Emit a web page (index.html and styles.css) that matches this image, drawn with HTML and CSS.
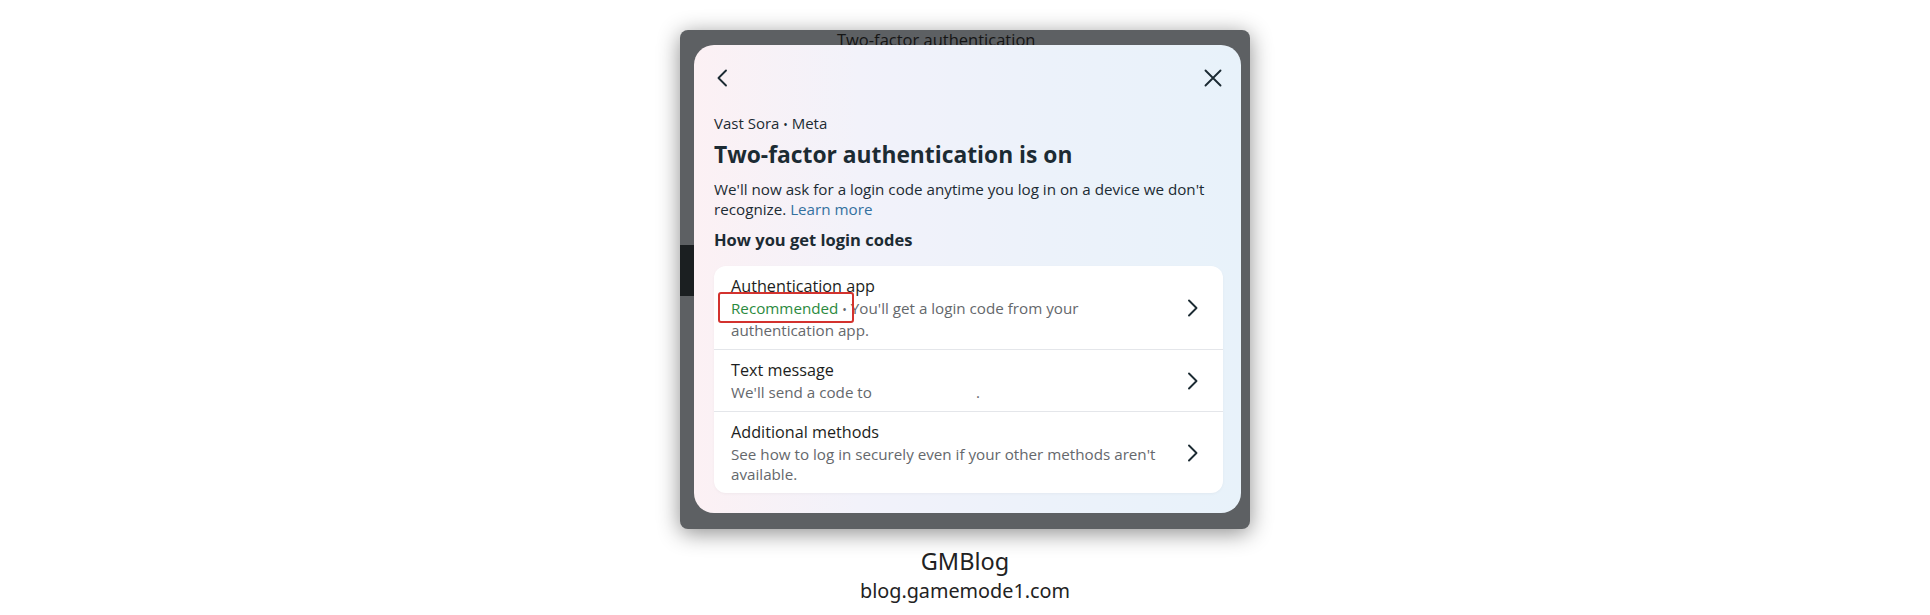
FILE: index.html
```html
<!DOCTYPE html>
<html lang="en">
<head>
<meta charset="utf-8">
<title>Two-factor authentication</title>
<link rel="stylesheet" href="styles.css">
</head>
<body>
<div class="page">
  <div class="frame">
    <div class="bg-title">Two-factor authentication</div>
    <div class="bg-block"></div>
    <div class="card">
      <div class="card-head">
        <button class="icon-btn back" aria-label="Back">
          <svg width="12" height="18" viewBox="0 0 12 18"><polyline points="10,1.5 2.5,9 10,16.5" fill="none" stroke="#1c2b33" stroke-width="1.9" stroke-linecap="round" stroke-linejoin="round"/></svg>
        </button>
        <button class="icon-btn close" aria-label="Close">
          <svg width="18" height="18" viewBox="0 0 18 18"><path d="M1.5 1.5 L16.5 16.5 M16.5 1.5 L1.5 16.5" fill="none" stroke="#1c2b33" stroke-width="1.9" stroke-linecap="round"/></svg>
        </button>
      </div>
      <div class="account">Vast Sora <span class="dot">•</span> Meta</div>
      <h1 class="title">Two-factor authentication is on</h1>
      <p class="desc">We'll now ask for a login code anytime you log in on a device we don't recognize. <a class="link" href="#">Learn more</a></p>
      <h2 class="subhead">How you get login codes</h2>
      <div class="list">
        <div class="row">
          <div class="row-text">
            <div class="row-title">Authentication app</div>
            <div class="row-sub"><span class="rec">Recommended<span class="mark"></span></span> <span class="dot">•</span> You'll get a login code from your authentication app.</div>
          </div>
          <svg class="chev" width="12" height="18" viewBox="0 0 12 18"><polyline points="2,1.5 9.5,9 2,16.5" fill="none" stroke="#1c2b33" stroke-width="1.9" stroke-linecap="round" stroke-linejoin="round"/></svg>
        </div>
        <div class="row">
          <div class="row-text">
            <div class="row-title">Text message</div>
            <div class="row-sub">We'll send a code to <span class="redacted"></span>.</div>
          </div>
          <svg class="chev" width="12" height="18" viewBox="0 0 12 18"><polyline points="2,1.5 9.5,9 2,16.5" fill="none" stroke="#1c2b33" stroke-width="1.9" stroke-linecap="round" stroke-linejoin="round"/></svg>
        </div>
        <div class="row">
          <div class="row-text">
            <div class="row-title">Additional methods</div>
            <div class="row-sub">See how to log in securely even if your other methods aren't available.</div>
          </div>
          <svg class="chev" width="12" height="18" viewBox="0 0 12 18"><polyline points="2,1.5 9.5,9 2,16.5" fill="none" stroke="#1c2b33" stroke-width="1.9" stroke-linecap="round" stroke-linejoin="round"/></svg>
        </div>
      </div>
    </div>
  </div>
  <div class="footer">
    <div class="brand">GMBlog</div>
    <div class="url">blog.gamemode1.com</div>
  </div>
</div>
</body>
</html>
```
FILE: styles.css
```css
* { box-sizing: border-box; }

html, body {
  margin: 0;
  padding: 0;
  background: #ffffff;
}

body {
  font-family: "Open Sans", "Noto Sans", sans-serif;
  color: #1c2b33;
}

.page {
  display: flex;
  flex-direction: column;
  align-items: center;
  padding-top: 30px;
}

.frame {
  position: relative;
  width: 570px;
  height: 499px;
  background: #5d6063;
  border-radius: 8px;
  padding: 15px 9px 16px 14px;
  box-shadow: 0 4px 22px rgba(0, 0, 0, 0.45);
}

.bg-title {
  position: absolute;
  left: 157px;
  top: 0;
  font-size: 16.5px;
  line-height: 20px;
  color: #151515;
  white-space: nowrap;
}

.bg-block {
  position: absolute;
  left: 0;
  top: 215px;
  width: 14px;
  height: 51px;
  background: #1b1f21;
}

.card {
  position: relative;
  height: 100%;
  border-radius: 20px;
  background: linear-gradient(90deg, #fcf1f4 0%, #f2f2fa 30%, #ecf2fa 65%, #e8f2fa 100%);
  padding: 2.5px 18px 20px 20px;
  display: flex;
  flex-direction: column;
}

.card-head {
  height: 66px;
  display: flex;
  align-items: center;
  justify-content: space-between;
  margin-right: 1px;
}

.icon-btn {
  border: 0;
  background: none;
  padding: 0;
  display: flex;
  align-items: center;
  justify-content: center;
  cursor: pointer;
}

.icon-btn.back { margin-left: 2px; }

.dot {
  font-size: 0.8em;
}

.account {
  margin-top: 5.5px;
  font-size: 15px;
  line-height: 20px;
  color: #1c2b33;
}

.title {
  margin: 5px 0 0;
  font-size: 22.8px;
  line-height: 30px;
  font-weight: 700;
  color: #1c2b33;
}

.desc {
  margin: 9px 0 0;
  font-size: 15.2px;
  line-height: 20px;
  color: #1c2b33;
}

.link {
  color: #33709f;
  text-decoration: none;
}

.subhead {
  margin: 10px 0 0;
  font-size: 16.5px;
  line-height: 22px;
  font-weight: 700;
  color: #1c2b33;
}

.list {
  margin-top: 15px;
  background: #ffffff;
  border-radius: 12px;
  box-shadow: 0 1px 3px rgba(0, 0, 0, 0.04);
  display: flex;
  flex-direction: column;
}

.row {
  display: flex;
  align-items: center;
  gap: 17px;
  padding: 10px 24px 9px 17px;
}

.row + .row {
  border-top: 1px solid #e4e6ea;
}

.row-text {
  flex: 1;
}

.row-title {
  font-size: 16.2px;
  line-height: 20px;
  color: #1c1e21;
}

.row-sub {
  margin-top: 2px;
  font-size: 15.2px;
  line-height: 20px;
  color: #65686c;
}

.rec {
  position: relative;
  color: #2b8a3e;
}

.mark {
  position: absolute;
  left: -13px;
  top: -6px;
  width: 136px;
  height: 31px;
  border: 2.5px solid #d3322e;
  border-radius: 3px;
}

.redacted {
  display: inline-block;
  width: 100px;
}

.chev {
  flex: none;
}

.footer {
  margin-top: 18px;
  display: flex;
  flex-direction: column;
  align-items: center;
  font-family: "Noto Sans", "Open Sans", sans-serif;
  color: #222222;
}

.brand {
  font-size: 23.5px;
  line-height: 29px;
}

.url {
  font-size: 19.8px;
  line-height: 29px;
}
```
